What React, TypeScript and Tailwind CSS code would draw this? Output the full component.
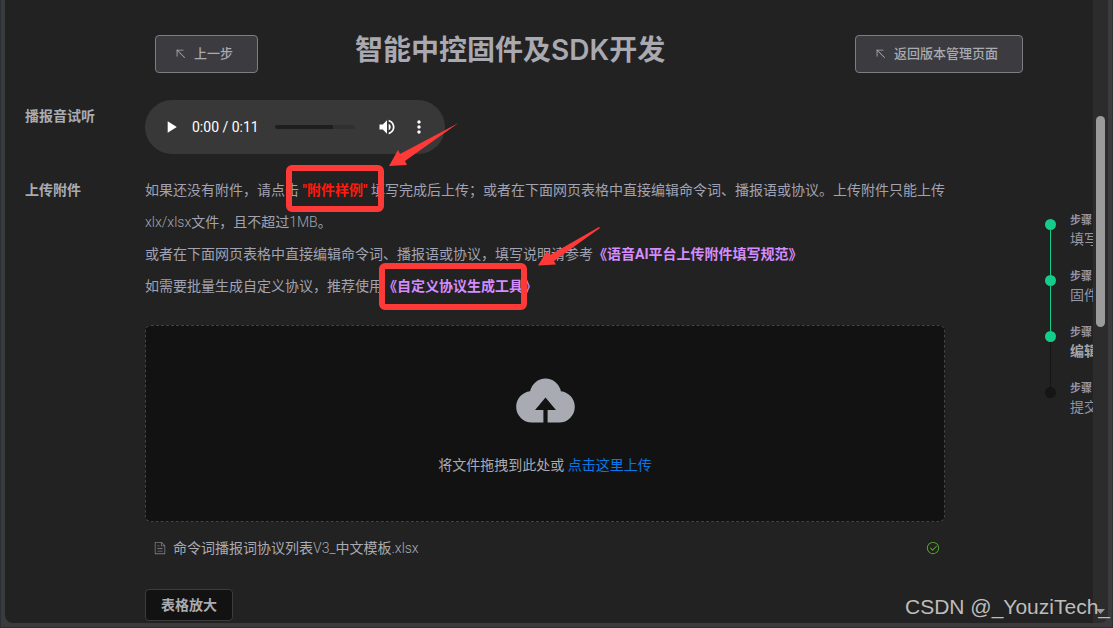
import { useState } from "react";
import { MdMoreVert, MdPlayArrow, MdVolumeUp } from "react-icons/md";

const steps = [
  { title: "填写", done: true, current: false },
  { title: "固件", done: true, current: false },
  { title: "编辑", done: true, current: true },
  { title: "提交", done: false, current: false },
];

const TopLeftIcon = () => (
  <svg viewBox="0 0 1024 1024" className="size-3.5 shrink-0" fill="currentColor">
    <path d="M256 256h416a32 32 0 1 0 0-64H224a32 32 0 0 0-32 32v448a32 32 0 0 0 64 0V256z" />
    <path d="M246.656 201.344a32 32 0 0 0-45.312 45.312l544 544a32 32 0 0 0 45.312-45.312l-544-544z" />
  </svg>
);

const UploadIcon = () => (
  <svg viewBox="0 0 1024 1024" className="size-[67px] text-[#a8abb2]" fill="currentColor">
    <path d="M544 864V672h128L512 480 352 672h128v192H320v-1.6c-5.376.32-10.496 1.6-16 1.6A240 240 0 0 1 64 624c0-123.136 93.12-223.488 212.608-237.248A239.808 239.808 0 0 1 512 192a239.872 239.872 0 0 1 235.456 194.752c119.488 13.76 212.48 114.112 212.48 237.248a240 240 0 0 1-240 240c-5.376 0-10.56-1.28-16-1.6v1.6H544z" />
  </svg>
);

const DocumentIcon = () => (
  <svg viewBox="0 0 1024 1024" className="size-3.5 text-[#77787d]" fill="currentColor">
    <path d="M832 384H576V128H192v768h640V384zm-26.496-64L640 154.496V320h165.504zM160 64h480l256 256v608a32 32 0 0 1-32 32H160a32 32 0 0 1-32-32V96a32 32 0 0 1 32-32zm160 448h384v64H320v-64zm0-192h160v64H320v-64zm0 384h384v64H320v-64z" />
  </svg>
);

const CircleCheckIcon = () => (
  <svg viewBox="0 0 1024 1024" className="size-3.5 text-[#5fb336]" fill="currentColor">
    <path d="M512 896a384 384 0 1 0 0-768 384 384 0 0 0 0 768zm0 64a448 448 0 1 1 0-896 448 448 0 0 1 0 896z" />
    <path d="M745.344 361.344a32 32 0 0 1 45.312 45.312l-288 288a32 32 0 0 1-45.312 0l-160-160a32 32 0 1 1 45.312-45.312L480 626.752l265.344-265.408z" />
  </svg>
);

const BackButton = ({ label }: { label: string }) => (
  <button
    type="button"
    className="flex items-center gap-1.5 h-[38px] pl-[18px] pr-6 text-[13px] font-medium text-[#a9abb2] whitespace-nowrap bg-[#3c3b40] border border-[#7d7d82] rounded"
  >
    <TopLeftIcon />
    {label}
  </button>
);

const AudioPlayer = () => {
  const [position, setPosition] = useState(0);

  return (
    <div className="flex items-center w-[300px] h-[54px] px-4 text-white bg-[#383838] rounded-full">
      <button type="button" aria-label="播放">
        <MdPlayArrow size={20} />
      </button>
      <span className="w-[94px] pl-[11px] text-sm whitespace-nowrap">0:00 / 0:11</span>
      <input
        type="range"
        aria-label="进度"
        min={0}
        max={11}
        value={position}
        onChange={(e) => setPosition(Number(e.target.value))}
        className="w-20 h-1 appearance-none rounded-full bg-linear-to-r from-[#1e1e1e] from-72% to-[#303030] to-72% [&::-webkit-slider-thumb]:appearance-none [&::-webkit-slider-thumb]:size-0"
      />
      <button type="button" aria-label="音量" className="ml-auto">
        <MdVolumeUp size={20} />
      </button>
      <button type="button" aria-label="更多" className="ml-3">
        <MdMoreVert size={20} />
      </button>
    </div>
  );
};

// red boxes and arrows drawn over the instructions
const Highlights = () => (
  <div className="pointer-events-none">
    <div className="absolute left-[141px] top-[-9px] w-[98px] h-[47px] border-6 border-[#fd3a38] rounded-md" />
    <div className="absolute left-[234px] top-[89px] w-[148px] h-[47px] border-6 border-[#fd3a38] rounded-md" />
    <svg className="absolute left-[244px] top-[-51px] w-[70px] h-[43px]" viewBox="0 0 70 43" fill="#fd3a38">
      <path d="M0 43 9 27 11 31 69.500 0 16 38 18 42Z" />
    </svg>
    <svg className="absolute left-[393px] top-[53px] w-[62px] h-[39px]" viewBox="0 0 62 39" fill="#fd3a38">
      <path d="M0 38.500 9 24 12 28 61 0 62 1 16 34 18 37.500Z" />
    </svg>
  </div>
);

const Stepper = () => (
  <aside className="flex gap-3.5 w-12 mt-[110px] ml-[100px] shrink-0 overflow-hidden">
    <div className="flex flex-col items-center pt-[9px] shrink-0">
      {steps.map((step, index) => (
        <div key={step.title} className="flex flex-col items-center">
          {index > 0 && (
            <span className={`w-px h-[45px] ${step.done ? "bg-[#13ce8b]" : "bg-[#151515]"}`} />
          )}
          <span className={`size-[11px] rounded-full ${step.done ? "bg-[#13ce8b]" : "bg-[#151517]"}`} />
        </div>
      ))}
    </div>
    <ol className="pt-0.5 whitespace-nowrap text-[#9495a5]">
      {steps.map((step) => (
        <li key={step.title} className="h-14">
          <p className="text-[11px] leading-[18px] font-bold">步骤</p>
          <p className={`text-sm leading-[18px] ${step.current ? "font-bold text-[#a3a4a8]" : ""}`}>
            {step.title}
          </p>
        </li>
      ))}
    </ol>
  </aside>
);

const Scrollbar = () => (
  <div className="flex flex-col items-center justify-between w-[15px] pt-[116px] pb-[9px] bg-[#2c2c2c] rounded-br-lg shrink-0">
    <div className="w-[9px] h-[211px] bg-[#9b9b9b] rounded-full" />
    <svg className="w-[9px] h-[5px]" viewBox="0 0 9 5" fill="#9b9b9b">
      <path d="M0 0H9L4.500 5Z" />
    </svg>
  </div>
);

const App = () => {
  return (
    <div className="min-h-screen px-px pb-px bg-[#2b2f36] font-['Roboto','Noto_Sans_CJK_SC',sans-serif]">
      <div className="relative flex min-h-[calc(100vh-1px)] px-1 pb-1 bg-[#3b3b3b]">
        <main className="flex-1 min-w-0 pl-5 bg-[#222222] rounded-bl-lg text-[#a9abb2]">
          <header className="flex items-start pt-[35px] pl-[130px] pr-[70px] h-[100px]">
            <BackButton label="上一步" />
            <h1 className="ml-[97px] text-[28px] leading-[30px] font-bold text-[#a9a9b1] whitespace-nowrap">
              智能中控固件及<span className="font-['Inter',sans-serif] font-semibold">SDK</span>开发
            </h1>
            <div className="ml-auto">
              <BackButton label="返回版本管理页面" />
            </div>
          </header>

          <div className="flex">
            <div className="flex flex-col flex-1 min-w-0 gap-5">
              <section className="flex">
                <h2 className="w-[120px] text-sm leading-8 font-bold shrink-0">播报音试听</h2>
                <AudioPlayer />
              </section>

              <section className="flex">
                <h2 className="w-[120px] text-sm leading-8 font-bold shrink-0">上传附件</h2>
                <div className="relative flex-1 min-w-0 text-sm">
                  <div className="leading-8 text-[#a1a2b3]">
                    <p className="whitespace-nowrap">
                      如果还没有附件，请点击{" "}
                      <a href="#sample" className="font-bold text-[#ff1a0d]">
                        "附件样例"
                      </a>{" "}
                      填写完成后上传；或者在下面网页表格中直接编辑命令词、播报语或协议。上传附件只能上传
                      <br />
                      <span className="font-light">xlx/xlsx</span>文件，且不超过
                      <span className="font-light">1MB</span>。
                    </p>
                    <p>
                      或者在下面网页表格中直接编辑命令词、播报语或协议，填写说明请参考
                      <a href="#guide" className="font-bold text-[#d58cff]">
                        《语音AI平台上传附件填写规范》
                      </a>
                    </p>
                    <p>
                      如需要批量生成自定义协议，推荐使用
                      <a href="#tool" className="font-bold text-[#d58cff]">
                        《自定义协议生成工具》
                      </a>
                    </p>
                  </div>

                  <div className="flex flex-col items-center gap-4 py-10 mt-[23px] bg-[#121212] border border-dashed border-[#434343] rounded-md">
                    <UploadIcon />
                    <p className="leading-8">
                      将文件拖拽到此处或{" "}
                      <a href="#upload" className="text-[#0878e8]">
                        点击这里上传
                      </a>
                    </p>
                  </div>

                  <div className="flex items-center gap-1.5 h-8 pl-2 pr-[5px] mt-2.5">
                    <DocumentIcon />
                    <span>
                      命令词播报词协议列表<span className="font-light">V3_</span>中文模板
                      <span className="font-light">.xlsx</span>
                    </span>
                    <span className="ml-auto">
                      <CircleCheckIcon />
                    </span>
                  </div>

                  <button
                    type="button"
                    className="h-8 px-[15px] mt-[25px] mb-0.5 font-bold bg-[#121212] border border-[#3c3c3c] rounded"
                  >
                    表格放大
                  </button>
                  <Highlights />
                </div>
              </section>
            </div>
            <Stepper />
          </div>
        </main>
        <Scrollbar />
        <span className="absolute right-0.5 bottom-1 text-[21px] leading-8 font-['Liberation_Sans',sans-serif] text-[#bdbdbd] whitespace-nowrap">
          CSDN @_YouziTech_
        </span>
      </div>
    </div>
  );
};

export default App;
